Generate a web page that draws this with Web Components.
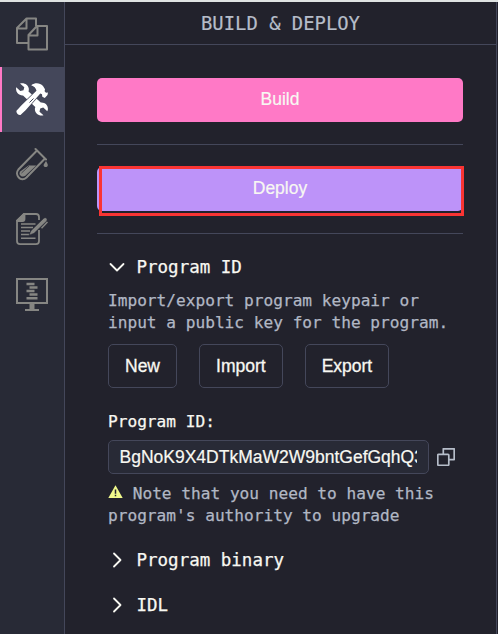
<!DOCTYPE html>
<html lang="en">
<head>
<meta charset="utf-8">
<title>Build &amp; Deploy</title>
<style>
html,body{margin:0;height:100%;background:#22222c;overflow:hidden}
</style>
</head>
<body>
<app-shell></app-shell>
<script>
const define = (name, html) => {
  const t = document.createElement('template');
  t.innerHTML = html;
  customElements.define(name, class extends HTMLElement {
    constructor() {
      super();
      this.attachShadow({ mode: 'open' }).append(t.content.cloneNode(true));
    }
  });
};

define('nav-item', `<style>
:host{display:flex;box-sizing:border-box;height:65px;width:64px;align-items:center;justify-content:center;padding-bottom:1px;color:#868683}
:host([active]){width:65px;background:#44475a;color:#fff;border-left:2px solid #ff79c6;padding-right:3px}
::slotted(svg){display:block;width:32px;height:34px}
</style><slot></slot>`);

define('side-bar', `<style>
:host{display:flex;flex-direction:column;box-sizing:border-box;width:65px;flex:none;background:#282a36;border-right:1px solid #44475a}
</style>
<nav-item><svg viewBox="0 0 32 34" fill="none" stroke="currentColor" stroke-width="2" stroke-linejoin="round"><path d="M12 26H1V11L10.500 1.500H20V9M1.500 11.500H10.500V2M12.500 32.500V18L21 9H31V32.500ZM13 18.500H21.500V9.500"/></svg></nav-item>
<nav-item active><svg viewBox="0 0 32 34"><g fill="currentColor"><path d="M4 1.500C8 .2 12.300 2.600 12.800 6.500C12.900 7.800 12.800 8.600 12.500 9.500L24.800 20.600C29 20.200 32.300 23.500 31.900 27.500L31.300 29.300L27.200 25.600L24.200 26.500L23.500 29.700L27.500 33.200C23 34.500 18.500 31 18.900 26.600L19.300 25L7 13.400C2.800 13.800-.8 10 .2 5.200L4.300 9L7.500 8.200L8.300 5.200Z"/><path d="M15.200 3.200C19.500.2 24 1 27 4L29 7.300L28.600 9.300L30 10.700L32 10.500L31.500 13L28.800 16L26.300 14.800L26 12.300L24.300 11.500L9.800 28L4.500 33C2.500 33.500-.1 31 .5 28.800L5.300 23.500L20.500 8.800C20 5.800 18 4.400 15.200 3.200Z" stroke="#44475a" stroke-width="1.200" paint-order="stroke"/></g><path d="M13.500 20.500L17.500 16.500" stroke="#44475a" stroke-width="1"/></svg></nav-item>
<nav-item><svg viewBox="0 0 32 34"><g fill="none" stroke="currentColor" stroke-width="2" stroke-linecap="round"><path d="M19.500 2L30 12.500M20.500 4L2.400 22.500C-2 28 5 35.500 10.500 30.500L28.500 12"/></g><path d="M12.500 18.500H20.200L9.300 28.800C6 31.300 1.800 27.500 4.200 24.500Z" fill="currentColor"/><path d="M5.500 26L13 19" stroke="#282a36" stroke-width=".7"/><path d="M30 14C31 16 32 17 31.800 18.400C31.300 20.800 28 20.500 27.600 18.400C27.500 17 29 16 30 14Z" fill="currentColor"/></svg></nav-item>
<nav-item><svg viewBox="0 0 32 34" fill="none" stroke="currentColor" stroke-width="1.800"><path d="M23 8V5Q23 2 20 2H8L1 9V29Q1 32.200 4 32.200H20Q23 32.200 23 29V18"/><path d="M8.500 2V7Q8.500 9 6.500 9H1.500L1 8.500L8 2Z" fill="currentColor"/><path d="M5 12H19.500M5 15.500H17M5 19H14M5 22.500H13M5 26.300H19.500" stroke-width="1.600"/><path d="M13 23.200L15 18.700L27.600 6.400Q29 5 30.600 6.200Q31.800 8 30.500 9.200L18 21.300Z" fill="currentColor" stroke="#282a36" stroke-width=".5"/><path d="M31.500 10L25.500 16.200" stroke-width="1.500"/></svg></nav-item>
<nav-item><svg viewBox="0 0 32 34" fill="none" stroke="currentColor" stroke-width="2"><rect x="1" y="2" width="30" height="24"/><path d="M16 27V32" stroke-width="5"/><path d="M9 33H23"/><path d="M10.500 7H18.500M13.500 10.500H21.500M10.500 14H18.500M13.500 17.500H21.500M10.500 21.300H21.500" stroke-width="2.400"/></svg></nav-item>`);

define('panel-header', `<style>
:host{display:flex;align-items:center;justify-content:center;height:42px;border-bottom:1px solid #44475a;font-size:18.870px;color:#b6bdc9;-webkit-text-stroke:.2px #b6bdc9}
</style><slot></slot>`);

define('wide-button', `<style>
:host{display:block;position:relative;height:44px}
button{display:block;width:100%;height:44px;padding:0 0 2px;border:0;border-radius:5px;background:var(--tone);color:#f8f8f2;font:17.500px "Liberation Sans",Arial,sans-serif;-webkit-text-stroke:.2px #f8f8f2}
:host([marked])::after{content:"";position:absolute;box-sizing:border-box;left:2px;right:-1px;top:-1px;height:50px;border:3px solid #fa3433}
</style><button><slot></slot></button>`);

define('rule-line', `<style>:host{display:block;height:1px;background:#44475a;margin:22px 0}</style>`);

define('outline-button', `<style>
:host{display:block}
button{display:block;box-sizing:border-box;height:44px;padding:0 16px;border:1px solid #44475a;border-radius:5px;background:transparent;color:#f8f8f2;font:17.500px "Liberation Sans",Arial,sans-serif;-webkit-text-stroke:.3px #f8f8f2}
</style><button><slot></slot></button>`);

define('fold-section', `<style>
:host{display:block}
header{display:flex;align-items:center;height:24px;gap:12px;padding-left:.5px;font-size:17.500px;color:#f8f8f2;white-space:nowrap;-webkit-text-stroke:.25px #f8f8f2}
svg{width:16px;height:16px;flex:none;fill:none;stroke:#f8f8f2;stroke-width:1.800;stroke-linecap:round;stroke-linejoin:round}
:host([open]) svg{transform:rotate(90deg)}
</style><header><svg viewBox="0 0 16 16"><path d="M5 1.500L11.500 8L5 14.500"/></svg><slot name="title"></slot></header><slot></slot>`);

define('help-text', `<style>
:host{display:block;font-size:16.150px;line-height:22.200px;color:#b1b7c4;white-space:nowrap;-webkit-text-stroke:.25px #b1b7c4}
::slotted(svg){width:15px;height:13px;vertical-align:1px}
</style><slot></slot>`);

define('key-field', `<style>
:host{display:block}
label{display:block;font-size:16.150px;line-height:22.200px;color:#f8f8f2;-webkit-text-stroke:.25px #f8f8f2}
.row{display:flex;align-items:center;gap:8px;margin-top:6.900px}
.box{box-sizing:border-box;width:321px;height:34px;border:1px solid #44475a;border-radius:5px;background:#282a36;padding:0 11px 0 10.500px}
.value{overflow:hidden;white-space:nowrap;font:17.500px/32px "Liberation Sans",Arial,sans-serif;color:#f8f8f2;-webkit-text-stroke:.2px #f8f8f2}
svg{width:18px;height:18px;fill:none;stroke:#b6bdc9;stroke-width:1.700;stroke-linejoin:round}
</style><label><slot name="label"></slot></label>
<div class="row"><div class="box"><div class="value"><slot></slot></div></div>
<svg viewBox="0 0 18 18"><rect x=".8" y="6.300" width="11" height="11" rx=".8"/><path d="M6.300 6V.8H17.200V11.700H12"/></svg></div>`);

define('app-shell', `<style>
:host{display:flex;box-sizing:border-box;width:498px;height:634px;border-top:2px solid #dfe3e2;background:#22222c;font-family:"DejaVu Sans Mono",monospace}
main{flex:none;box-sizing:border-box;width:432px;border-right:1px solid #44475a}
.content{padding:33px 33px 0 32px}
.sections{padding:0 0 0 11px;margin-top:-1px}
help-text.intro{margin-top:11px}
.buttons{display:flex;gap:22px;margin-top:9.600px}
key-field{margin-top:22.900px}
help-text.note{margin-top:9px}
.binary{margin-top:20.800px}
.idl{margin-top:21px}
</style>
<side-bar></side-bar>
<main>
<panel-header>BUILD &amp; DEPLOY</panel-header>
<div class="content">
<wide-button style="--tone:#ff79c6">Build</wide-button>
<rule-line></rule-line>
<wide-button marked style="--tone:#bd93f9">Deploy</wide-button>
<rule-line></rule-line>
<div class="sections">
<fold-section open><span slot="title">Program ID</span>
<help-text class="intro">Import/export program keypair or<br>input a public key for the program.</help-text>
<div class="buttons"><outline-button>New</outline-button><outline-button>Import</outline-button><outline-button>Export</outline-button></div>
<key-field><span slot="label">Program ID:</span>BgNoK9X4DTkMaW2W9bntGefGqhQ3</key-field>
<help-text class="note"><svg viewBox="0 0 15 13"><path d="M7.500 .3L14.700 13H.3Z" fill="#f1fa8c"/><path d="M7.500 4.500V8.800M7.500 9.800V11.300" stroke="#22222c" stroke-width="1.500"/></svg> Note that you need to have this<br>program's authority to upgrade</help-text>
</fold-section>
<fold-section class="binary"><span slot="title">Program binary</span></fold-section>
<fold-section class="idl"><span slot="title">IDL</span></fold-section>
</div>
</div>
</main>`);
</script>
</body>
</html>
